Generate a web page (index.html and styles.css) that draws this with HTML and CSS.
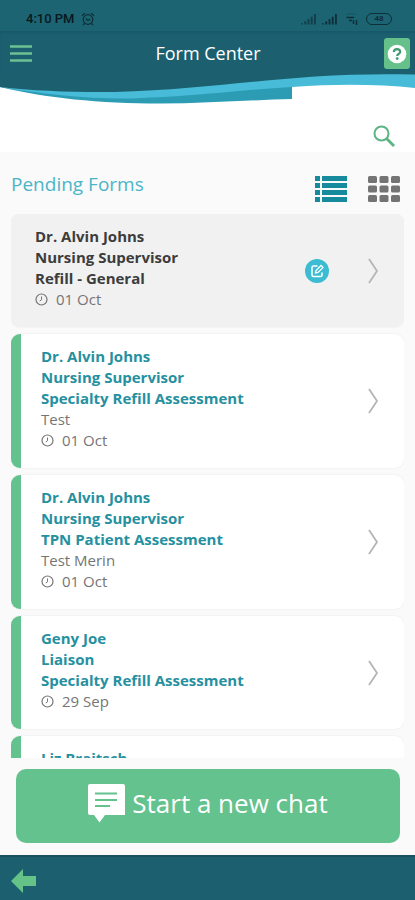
FILE: index.html
```html
<!DOCTYPE html>
<html lang="en">
<head>
<meta charset="utf-8">
<meta name="viewport" content="width=device-width, initial-scale=1">
<title>Form Center</title>
<link rel="stylesheet" href="styles.css">
</head>
<body>
<svg class="defs" aria-hidden="true">
  <symbol id="clock" viewBox="0 0 13 13"><circle cx="6.500" cy="6.500" r="5.500" fill="none" stroke="currentColor" stroke-width="1.200"/><path d="M6.500 3.500V6.800L4.800 8" fill="none" stroke="currentColor"/></symbol>
  <symbol id="chevron" viewBox="0 0 12 28"><path d="M2 2L10 14L2 26" fill="none" stroke="currentColor" stroke-width="1.800"/></symbol>
  <symbol id="signal" viewBox="0 0 16 12"><path d="M0 11.500V10h2v1.500zM3.500 11.500V8h2v3.500zM7 11.500V5.500h2v6zM10.500 11.500V3h2v8.500zM14 11.500V0h2v11.500z" fill="currentColor"/></symbol>
</svg>

<div class="status">
  <span class="time">4:10 PM</span>
  <svg class="alarm" viewBox="0 0 14 14" fill="none" stroke="currentColor" stroke-width="1.200"><circle cx="7" cy="7.500" r="4.800"/><path d="M1 3.800L3.800 1.200M10.200 1.200L13 3.800M3.500 11.500L2 13.200M10.500 11.500L12 13.200M4.800 6.500L7 8.500L9.300 7"/></svg>
  <div class="status-right">
    <svg class="signal dim" aria-hidden="true"><use href="#signal"/></svg>
    <svg class="signal" aria-hidden="true"><use href="#signal"/></svg>
    <svg class="wifi" viewBox="0 0 13 12" fill="none" stroke="currentColor"><path d="M1 1.500Q6 -.5 11 1.500" opacity=".3"/><path d="M1.500 4.500H9" stroke-width="1.500"/><path d="M4 7.500h3M8.500 7v4M11.500 7v5" stroke-width="1.500"/></svg>
    <span class="battery">48</span>
  </div>
</div>

<header class="header">
  <div class="bar">
    <button class="menu" aria-label="Menu"><svg viewBox="0 0 22 17"><path d="M0 1.500h22M0 8.500h22M0 15.500h22" stroke="currentColor" stroke-width="2.400"/></svg></button>
    <h1>Form Center</h1>
    <button class="help" aria-label="Help"><svg viewBox="0 0 20 20"><circle cx="10" cy="10" r="9.300" fill="#fff"/><path d="M6.800 8Q7 5.200 10 5.200Q13.200 5.200 13.200 7.800Q13.200 9.200 11.600 10Q10.200 10.700 10.200 12" fill="none" stroke="currentColor" stroke-width="2.200"/><circle cx="10.200" cy="14.600" r="1.400" fill="currentColor"/></svg></button>
  </div>
  <svg class="wave" viewBox="0 0 415 33" preserveAspectRatio="none" aria-hidden="true">
    <path d="M0 14C45 25 100 30.500 160 30.500C205 30.500 250 27 292 26V10H0z" fill="#2c9cb5"/>
    <path d="M0 14C40 21 90 26 130 25.500C190 24 240 17 292 14C340 10.500 380 11.500 415 15V0H0z" fill="#47bbd7"/>
    <path d="M0 0V14C35 18 75 19.500 115 19C190 17 250 8 315 3.500C350 1 385 .8 415 1.500V0z" fill="#1c6070"/>
  </svg>
  <div class="search-row">
    <button class="search" aria-label="Search"><svg viewBox="0 0 22 22" fill="none" stroke="currentColor"><circle cx="8.500" cy="8.500" r="7" stroke-width="2"/><path d="M13.500 13.500L21 21" stroke-width="2.800"/></svg></button>
  </div>
</header>

<main class="content">
  <div class="heading">
    <h2>Pending Forms</h2>
    <button class="view active" aria-label="List view"><svg viewBox="0 0 32 26" fill="currentColor"><path d="M0 0h5v5H0zM7 0h25v5H7zM0 7h5v5H0zM7 7h25v5H7zM0 14h5v5H0zM7 14h25v5H7zM0 21h5v5H0zM7 21h25v5H7z"/></svg></button>
    <button class="view" aria-label="Grid view"><svg viewBox="0 0 32 26" fill="currentColor"><g id="r"><rect width="9" height="7" rx="1.500"/><rect x="11.500" width="9" height="7" rx="1.500"/><rect x="23" width="9" height="7" rx="1.500"/></g><use href="#r" y="9.500"/><use href="#r" y="19"/></svg></button>
  </div>
  <div class="list">
    <a class="card read" href="#">
      <div class="info"><strong>Dr. Alvin Johns</strong><strong>Nursing Supervisor</strong><strong>Refill - General</strong><span class="date"><svg><use href="#clock"/></svg>01 Oct</span></div>
      <svg class="edit" viewBox="0 0 24 24"><circle cx="12" cy="12" r="12" fill="#3bbcd2"/><path d="M12.500 7H8.500Q7 7 7 8.500V16Q7 17.500 8.500 17.500H15.500Q17 17.500 17 16V13.500" fill="none" stroke="#fff" stroke-width="1.500"/><path d="M10.500 14L11 11.500L16 6.500L18 8.500L13 13.500z" fill="none" stroke="#fff" stroke-width="1.300"/></svg>
      <svg class="chevron"><use href="#chevron"/></svg>
    </a>
    <a class="card" href="#">
      <div class="info"><strong>Dr. Alvin Johns</strong><strong>Nursing Supervisor</strong><strong>Specialty Refill Assessment</strong><span>Test</span><span class="date"><svg><use href="#clock"/></svg>01 Oct</span></div>
      <svg class="chevron"><use href="#chevron"/></svg>
    </a>
    <a class="card" href="#">
      <div class="info"><strong>Dr. Alvin Johns</strong><strong>Nursing Supervisor</strong><strong>TPN Patient Assessment</strong><span>Test Merin</span><span class="date"><svg><use href="#clock"/></svg>01 Oct</span></div>
      <svg class="chevron"><use href="#chevron"/></svg>
    </a>
    <a class="card" href="#">
      <div class="info"><strong>Geny Joe</strong><strong>Liaison</strong><strong>Specialty Refill Assessment</strong><span class="date"><svg><use href="#clock"/></svg>29 Sep</span></div>
      <svg class="chevron"><use href="#chevron"/></svg>
    </a>
    <a class="card" href="#">
      <div class="info"><strong>Liz Braitsch</strong></div>
    </a>
  </div>
</main>

<div class="action">
  <button class="chat"><svg viewBox="0 0 37 39"><path d="M2 0H35Q37 0 37 2V31H17L11.500 38.500L6 31H2Q0 31 0 29V2Q0 0 2 0z" fill="#fff"/><path d="M7 9.500H29M7 16H29M7 22H22" stroke="#63c28d" stroke-width="2"/></svg>Start a new chat</button>
</div>
<footer class="footer">
  <button class="back" aria-label="Back"><svg viewBox="0 0 25 24"><path d="M0 12L12 0V7H25V17H12V24z" fill="currentColor"/></svg></button>
</footer>
</body>
</html>
```
FILE: styles.css
```css
* { box-sizing: border-box; }
body {
  margin: 0;
  height: 100vh;
  display: flex;
  flex-direction: column;
  background: #fafafa;
  font-family: "Open Sans", sans-serif;
  font-size: 15px;
  line-height: 21px;
  color: #757575;
}
.defs { display: none; }
svg { display: block; flex: none; }
button {
  border: 0;
  padding: 0;
  background: none;
  font: inherit;
  color: inherit;
}
h1, h2 { margin: 0; font-weight: 400; }

.status {
  display: flex;
  align-items: center;
  flex: none;
  height: 31px;
  padding: 7px 23px 0 26px;
  background: #1d6472;
  color: #0e2e38;
}
.time { font: 500 13px/16px Roboto, sans-serif; color: #08181e; }
.alarm { width: 14px; height: 14px; margin-left: 6px; }
.status-right {
  display: flex;
  align-items: center;
  gap: 6px;
  margin-left: auto;
}
.signal { width: 15px; height: 11px; }
.dim { opacity: .7; }
.wifi { width: 13px; height: 12px; margin: 0 2px; }
.battery {
  width: 26px;
  border: 1px solid;
  border-radius: 6px;
  font: 700 8px/10px Roboto, sans-serif;
  text-align: center;
}

.header { flex: none; background: #fff; }
.bar {
  display: grid;
  grid-template-columns: 26px 1fr 26px;
  align-items: center;
  height: 42px;
  padding: 3px 5px 0 10px;
  background: #1c6070;
  color: #fff;
  box-shadow: inset 0 2px 2px #18586a;
}
.menu { color: #6cc092; }
.menu svg { width: 22px; height: 17px; }
h1 {
  padding: 0 4px 2px 0;
  font-size: 18px;
  line-height: 24px;
  text-align: center;
}
.help {
  display: grid;
  place-items: center;
  height: 31px;
  border-radius: 3px;
  background: #66c089;
  color: #3f9a70;
}
.help svg { width: 20px; height: 20px; }
.wave { width: 100%; height: 33px; }
.search-row {
  display: flex;
  justify-content: flex-end;
  height: 46px;
  padding: 19px 20px 0 0;
}
.search { height: 22px; color: #5db485; }
.search svg { width: 22px; height: 22px; }

.content {
  flex: 1;
  min-height: 0;
  display: flex;
  flex-direction: column;
  padding: 0 11px;
}
.heading {
  display: flex;
  align-items: center;
  gap: 21px;
  flex: none;
  height: 62px;
  padding: 12px 4px 0 0;
}
h2 {
  flex: 1;
  margin-bottom: 10px;
  font-size: 19px;
  line-height: 26px;
  color: #4bb5c8;
}
.view { color: #747474; }
.view svg { width: 32px; height: 26px; }
.active { color: #168b9e; }

.list {
  flex: 1;
  min-height: 0;
  overflow: hidden;
  display: flex;
  flex-direction: column;
  gap: 7px;
}
.card {
  display: flex;
  align-items: center;
  flex: none;
  padding: 0 25px 0 20px;
  border-left: 10px solid #63c28d;
  border-radius: 9px;
  background: #fff;
  box-shadow: 0 0 2px #e4e4e4;
  color: inherit;
  text-decoration: none;
}
.read {
  padding-left: 24px;
  border-left: 0;
  background: #f1f1f1;
}
.info { flex: 1; padding: 12px 0 17px; }
.info > * { display: block; }
strong { font-weight: 700; color: #2590a0; }
.read strong { color: #3c3c3c; }
.info .date { display: flex; align-items: center; gap: 8px; }
.date svg { width: 13px; height: 13px; }
.edit { width: 24px; height: 24px; margin-right: 38px; }
.chevron { width: 12px; height: 28px; color: #b5b5b5; }

.action { flex: none; padding: 11px 15px 12px 16px; }
.chat {
  display: flex;
  justify-content: center;
  align-items: center;
  gap: 7px;
  width: 100%;
  height: 74px;
  padding-bottom: 6px;
  border-radius: 10px;
  background: #63c28d;
  color: #fff;
  font-size: 26px;
}
.chat svg { width: 37px; height: 39px; }
.footer {
  flex: none;
  height: 45px;
  padding: 12px 11px 0;
  border-top: 2px solid #17525f;
  background: #1c6070;
}
.back { display: block; color: #66c388; }
.back svg { width: 25px; height: 24px; }
```
